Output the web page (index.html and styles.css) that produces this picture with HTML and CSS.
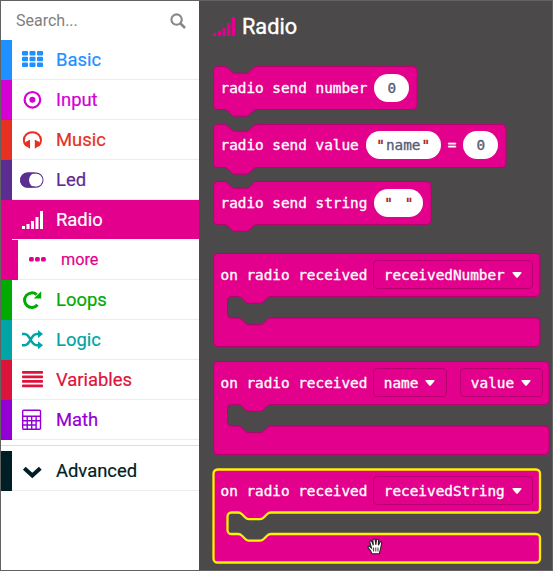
FILE: index.html
```html
<!DOCTYPE html>
<html lang="en">
<head>
<meta charset="utf-8">
<title>Radio blocks</title>
<link rel="stylesheet" href="styles.css">
</head>
<body>
<div class="editor">
  <nav class="toolbox">
    <div class="search"><span>Search...</span>
      <svg width="16" height="16" viewBox="0 0 16 16" fill="none" stroke="#888" stroke-width="2.1"><circle cx="6.6" cy="6.6" r="5.2"/><path d="M10.5 10.5L15 15" stroke-width="2.5"/></svg>
    </div>
    <div class="row basic"><svg class="icon" viewBox="0 0 22 22" fill="currentColor"><rect x="0" y="2" width="6" height="4.4" rx="1"/><rect x="7.5" y="2" width="6" height="4.4" rx="1"/><rect x="15" y="2" width="6" height="4.4" rx="1"/><rect x="0" y="7.8" width="6" height="4.4" rx="1"/><rect x="7.5" y="7.8" width="6" height="4.4" rx="1"/><rect x="15" y="7.8" width="6" height="4.4" rx="1"/><rect x="0" y="13.6" width="6" height="4.4" rx="1"/><rect x="7.5" y="13.6" width="6" height="4.4" rx="1"/><rect x="15" y="13.6" width="6" height="4.4" rx="1"/></svg><span>Basic</span></div>
    <div class="row input"><svg class="icon" viewBox="0 0 22 22"><circle cx="10.4" cy="10.800" r="7.8" fill="none" stroke="currentColor" stroke-width="2.2"/><circle cx="10.4" cy="10.800" r="3" fill="currentColor"/></svg><span>Input</span></div>
    <div class="row music"><svg class="icon" viewBox="0 0 22 22"><path d="M4.3 16.4C2.6 15 1.8 13.3 1.8 11.2C1.8 6.4 5.6 3.2 10.4 3.2S19 6.4 19 11.2C19 13.3 18.2 15 16.500 16.4" fill="none" stroke="currentColor" stroke-width="2"/><path d="M8 11v8.2H6.7l-.7-1.1C4.1 18 2.9 16.7 2.9 15S4.100 12 6 12l.7-1zM12.800 11v8.200h1.300l.7-1.100c1.900-.1 3.100-1.400 3.100-3.100s-1.200-3-3.100-3l-.7-1z" fill="currentColor"/></svg><span>Music</span></div>
    <div class="row led"><svg class="icon wide" viewBox="0 0 24 22"><rect x=".7" y="4.200" width="22.200" height="13.800" rx="6.900" fill="none" stroke="currentColor" stroke-width="1.300"/><path d="M7.500 3.600h9a7.300 7.300 0 0 0 0 15h-9a7.500 7.500 0 0 1 0-15z" fill="currentColor"/><circle cx="16.200" cy="11.100" r="6.300" fill="#fff"/></svg><span>Led</span></div>
    <div class="row radio"><svg class="icon" viewBox="0 0 22 22" fill="currentColor"><path d="M0 17h3v3H0zM4.500 15h3v5h-3zM9 12h3v8H9zM13.500 8h3v12h-3zM18 2h3v18h-3z"/></svg><span>Radio</span></div>
    <div class="row more"><svg class="dots" viewBox="0 0 17 5" fill="currentColor"><rect width="4.800" height="4.600" rx="1.500"/><rect x="6" width="4.800" height="4.600" rx="1.500"/><rect x="12" width="4.800" height="4.600" rx="1.500"/></svg><span>more</span></div>
    <div class="row loops"><svg class="icon" viewBox="0 0 22 22"><path d="M15.500 15.800A7.300 7.300 0 1 1 14.700 5.700" fill="none" stroke="currentColor" stroke-width="3"/><path d="M19.200 2.300v7.200h-7.400z" fill="currentColor"/></svg><span>Loops</span></div>
    <div class="row logic"><svg class="icon" viewBox="0 0 22 22"><path d="M0 5h2.500C9 5 8 16.300 15 16.300h2M0 16.300h2.500C9 16.300 8 5 15 5h2" fill="none" stroke="currentColor" stroke-width="2.500"/><path d="M16 1l5 4-5 4zM16 12.300l5 4-5 4z" fill="currentColor"/></svg><span>Logic</span></div>
    <div class="row variables"><svg class="icon" viewBox="0 0 22 22" fill="currentColor"><rect y="2" width="21" height="2.700" rx=".7"/><rect y="6.500" width="21" height="2.700" rx=".7"/><rect y="11.100" width="21" height="2.700" rx=".7"/><rect y="15.600" width="21" height="2.700" rx=".7"/></svg><span>Variables</span></div>
    <div class="row math"><svg class="icon" viewBox="0 0 22 22" fill="none" stroke="currentColor" stroke-width="1.400"><rect x=".7" y="1.300" width="17.800" height="19" rx="1"/><path d="M.7 7.300h17.800M.7 11.700h17.800M.7 16h13.300M5.200 7.300v13M9.700 7.300v13M14.100 7.300v13"/></svg><span>Math</span></div>
    <div class="divider"></div>
    <div class="row advanced"><svg class="icon" viewBox="0 0 22 22"><path d="M2.300 8.200l8 7.300 8-7.300" fill="none" stroke="currentColor" stroke-width="4"/></svg><span>Advanced</span></div>
  </nav>
  <main class="flyout">
    <header class="heading"><svg viewBox="0 0 22 19" width="22" height="19" fill="currentColor"><path d="M0 16h3.300v3H0zM4.800 14h3.300v5H4.800zM9.500 11h3.300v8H9.500zM14.100 6h3.300v13h-3.300zM18.700 0H22v19h-3.300z"/></svg><span>Radio</span></header>

    <div class="block send-number">
      <svg class="shape" viewBox="0 0 204 51"><path d="M.5 4.500a4 4 0 0 1 4-4H11c2 0 3 .8 4 1.800l3 3c1 1 2 1.900 4 1.900H33c2 0 3-.9 4-1.900l3-3c1-1 2-1.800 4-1.800H200a4 4 0 0 1 4 4V39.500a4 4 0 0 1-4 4H44c-2 0-3 .8-4 1.800l-3 3c-1 1-2 1.900-4 1.900H22c-2 0-3-.9-4-1.900l-3-3c-1-1-2-1.800-4-1.800H4.500a4 4 0 0 1-4-4z"/></svg>
      <div class="content"><span>radio send number</span><span class="pill">0</span></div>
    </div>
    <div class="block send-value">
      <svg class="shape" viewBox="0 0 293 51"><path d="M.5 4.500a4 4 0 0 1 4-4H11c2 0 3 .8 4 1.800l3 3c1 1 2 1.900 4 1.900H33c2 0 3-.9 4-1.900l3-3c1-1 2-1.800 4-1.800H289a4 4 0 0 1 4 4V39.500a4 4 0 0 1-4 4H44c-2 0-3 .8-4 1.800l-3 3c-1 1-2 1.900-4 1.900H22c-2 0-3-.9-4-1.900l-3-3c-1-1-2-1.800-4-1.800H4.500a4 4 0 0 1-4-4z"/></svg>
      <div class="content"><span>radio send value</span><span class="pill name"><i>"</i>name<i>"</i></span><span>=</span><span class="pill">0</span></div>
    </div>
    <div class="block send-string">
      <svg class="shape" viewBox="0 0 218 51"><path d="M.5 4.500a4 4 0 0 1 4-4H11c2 0 3 .8 4 1.800l3 3c1 1 2 1.900 4 1.900H33c2 0 3-.9 4-1.900l3-3c1-1 2-1.800 4-1.800H214a4 4 0 0 1 4 4V39.500a4 4 0 0 1-4 4H44c-2 0-3 .8-4 1.800l-3 3c-1 1-2 1.900-4 1.900H22c-2 0-3-.9-4-1.900l-3-3c-1-1-2-1.800-4-1.800H4.500a4 4 0 0 1-4-4z"/></svg>
      <div class="content"><span>radio send string</span><span class="pill empty"><i>"</i><i>"</i></span></div>
    </div>

    <div class="block event received-number">
      <svg class="shape" viewBox="0 0 327 94"><path d="M.5 4.500a4 4 0 0 1 4-4H323a4 4 0 0 1 4 4V39.500a4 4 0 0 1-4 4H58c-2 0-3 .8-4 1.800l-3 3c-1 1-2 1.900-4 1.900H36c-2 0-3-.9-4-1.900l-3-3c-1-1-2-1.800-4-1.800H18.500a4 4 0 0 0-4 4V61a4 4 0 0 0 4 4H25c2 0 3 .8 4 1.800l3 3c1 1 2 1.900 4 1.900H47c2 0 3-.9 4-1.900l3-3c1-1 2-1.800 4-1.800H323a4 4 0 0 1 4 4V89.500a4 4 0 0 1-4 4H4.500a4 4 0 0 1-4-4z"/></svg>
      <div class="content"><span>on radio received</span><span class="field">receivedNumber<svg class="caret" viewBox="0 0 10 6"><path d="M1 0h8q1 .3.500 1L5.800 5.500Q5 6 4.200 5.500L.5 1Q0 .3 1 0z"/></svg></span></div>
    </div>
    <div class="block event name-value">
      <svg class="shape" viewBox="0 0 336 94"><path d="M.5 4.500a4 4 0 0 1 4-4H332a4 4 0 0 1 4 4V39.500a4 4 0 0 1-4 4H58c-2 0-3 .8-4 1.800l-3 3c-1 1-2 1.900-4 1.900H36c-2 0-3-.9-4-1.900l-3-3c-1-1-2-1.800-4-1.800H18.500a4 4 0 0 0-4 4V61a4 4 0 0 0 4 4H25c2 0 3 .8 4 1.800l3 3c1 1 2 1.900 4 1.900H47c2 0 3-.9 4-1.900l3-3c1-1 2-1.800 4-1.800H332a4 4 0 0 1 4 4V89.500a4 4 0 0 1-4 4H4.500a4 4 0 0 1-4-4z"/></svg>
      <div class="content"><span>on radio received</span><span class="field">name<svg class="caret" viewBox="0 0 10 6"><path d="M1 0h8q1 .3.500 1L5.800 5.500Q5 6 4.200 5.500L.5 1Q0 .3 1 0z"/></svg></span><span class="field second">value<svg class="caret" viewBox="0 0 10 6"><path d="M1 0h8q1 .3.500 1L5.800 5.500Q5 6 4.200 5.500L.5 1Q0 .3 1 0z"/></svg></span></div>
    </div>
    <div class="block event received-string selected">
      <svg class="shape" viewBox="0 0 327 94"><path d="M.5 4.500a4 4 0 0 1 4-4H323a4 4 0 0 1 4 4V39.500a4 4 0 0 1-4 4H58c-2 0-3 .8-4 1.800l-3 3c-1 1-2 1.900-4 1.900H36c-2 0-3-.9-4-1.900l-3-3c-1-1-2-1.800-4-1.800H18.500a4 4 0 0 0-4 4V61a4 4 0 0 0 4 4H25c2 0 3 .8 4 1.800l3 3c1 1 2 1.900 4 1.900H47c2 0 3-.9 4-1.900l3-3c1-1 2-1.800 4-1.800H323a4 4 0 0 1 4 4V89.500a4 4 0 0 1-4 4H4.500a4 4 0 0 1-4-4z"/></svg>
      <div class="content"><span>on radio received</span><span class="field">receivedString<svg class="caret" viewBox="0 0 10 6"><path d="M1 0h8q1 .3.500 1L5.800 5.500Q5 6 4.200 5.500L.5 1Q0 .3 1 0z"/></svg></span></div>
      <svg class="hand" viewBox="0 0 17 17"><path d="M5 15.800C4.500 13.500 3 12 1.300 9.900C.3 8.500 2 7.500 3.200 8.800L4.500 10L2.800 4.300C2.400 2.800 4.300 2.300 4.900 3.600L6.300 7.200L5.900 2.200C5.800.7 7.900.5 8.200 2L8.900 6.800L9.400 2.200C9.600.8 11.500.9 11.500 2.400L11.400 7.200L12.700 4.400C13.300 3.100 15 3.500 14.700 5L13.600 10.500C13.300 12.500 12.500 13.800 12.400 15.800z" fill="#fff" stroke="#222" stroke-width="1.100"/><path d="M6.600 9.500v4M8.800 9.500v4M11 9.500v4" stroke="#222" stroke-width=".9"/></svg>
    </div>
  </main>
</div>
</body>
</html>
```
FILE: styles.css
```css
* { box-sizing: border-box; }
body { margin: 0; font-family: Roboto, sans-serif; }
.editor {
  display: grid;
  grid-template-columns: 199px 1fr;
  width: 553px;
  height: 571px;
  border: 1px solid #626262;
  background: #4b4949;
  overflow: hidden;
}
.toolbox { background: #fff; width: 198px; }
.search {
  height: 39px;
  display: flex;
  align-items: center;
  justify-content: space-between;
  padding: 0 13px 0 15px;
  font-size: 16px;
  color: #808080;
}
.row {
  display: flex;
  align-items: center;
  height: 40px;
  padding-left: 10px;
  border-left: 11px solid currentColor;
  font-size: 18.400px;
  -webkit-text-stroke: .2px currentColor;
  background: linear-gradient(#ececec, #ececec) left bottom / 100% 1px no-repeat;
}
.row span { line-height: 24px; }
.icon { width: 22px; height: 22px; margin-right: 12px; flex: none; }
.icon.wide { width: 24px; margin: 0 12px 0 -2px; }
.basic { color: #1e90ff; }
.input { color: #d400d4; }
.music { color: #e63022; }
.led { color: #5c2d91; }
.radio { color: #fff; background-color: #e3008c; border-color: #e3008c; background-image: linear-gradient(#fff, #fff); }
.more { color: #e3008c; border-left-width: 17px; padding-left: 11px; font-size: 16.200px; }
.dots { width: 17px; height: 5px; margin: 0 15px 2px 0; }
.loops { color: #00aa00; }
.logic { color: #00a4a6; }
.variables { color: #dc143c; }
.math { color: #9400d3; }
.advanced { color: #001e25; }
.divider { height: 11px; background: linear-gradient(#ddd, #ddd) 0 5px / 100% 1px no-repeat; }

.flyout { padding-left: 13px; }
.heading {
  display: flex;
  align-items: center;
  gap: 7px;
  height: 50px;
  color: #e3008c;
  font-size: 21.700px;
}
.heading span { color: #fff; -webkit-text-stroke: .4px #fff; }
.block {
  position: relative;
  height: 43px;
  margin-bottom: 14.700px;
  font: 14.350px "DejaVu Sans Mono", monospace;
  -webkit-text-stroke: .35px currentColor;
  color: #fff;
}
.send-number { width: 204px; margin-top: 15px; }
.send-value { width: 293px; }
.send-string { width: 218px; margin-bottom: 28.600px; }
.event { height: 94px; margin-bottom: 14px; }
.received-number, .received-string { width: 327px; }
.name-value { width: 336px; }
.shape { position: absolute; left: 0; top: 0; width: 100%; overflow: visible; }
.shape path { fill: #e3008c; stroke: #b6006f; stroke-width: .9; }
.selected .shape path { stroke: #fff200; stroke-width: 2.300; }
.content {
  position: relative;
  display: flex;
  align-items: center;
  gap: 7px;
  height: 43px;
  padding-left: 7.500px;
  white-space: pre;
}
.event .content { height: 44px; gap: 6px; }
.pill {
  width: 35px;
  height: 28px;
  border-radius: 14px;
  background: #fff;
  color: #575e75;
  display: flex;
  align-items: center;
  justify-content: center;
}
.pill.name { width: 75px; }
.pill.empty { width: 49px; gap: 12px; }
.pill i { color: #a31515; font-style: normal; }
.pill.name { gap: 1px; }
.field {
  display: flex;
  align-items: center;
  height: 29px;
  padding: 0 10.500px 0 9.500px;
  border: 1px solid #b6006f;
  border-radius: 4px;
}
.field.second { margin-left: 7.500px; }
.caret { width: 10px; height: 6px; margin-left: 7px; fill: #fff; }
.hand { position: absolute; left: 154px; top: 69px; width: 17px; height: 17px; }
```
